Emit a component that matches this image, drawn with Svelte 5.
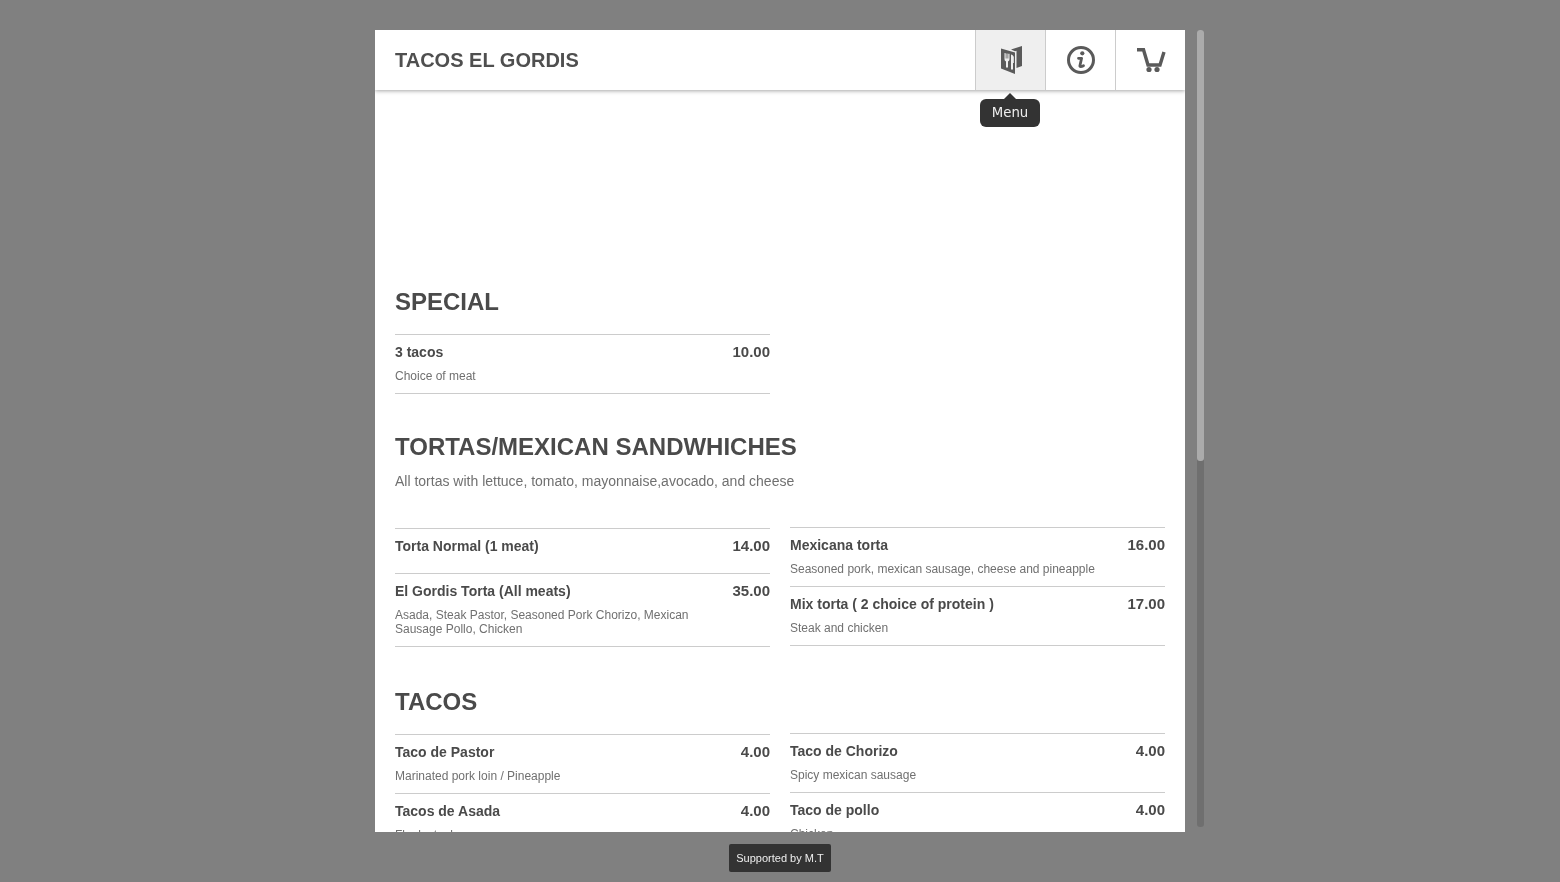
<script>
  const sections = [
    { title: 'SPECIAL', left: [{ n: '3 tacos', p: '10.00', d: 'Choice of meat' }], right: [], cls: 'first' },
    {
      title: 'TORTAS/MEXICAN SANDWHICHES',
      note: 'All tortas with lettuce, tomato, mayonnaise,avocado, and cheese',
      left: [
        { n: 'Torta Normal (1 meat)', p: '14.00' },
        { n: 'El Gordis Torta (All meats)', p: '35.00', d: 'Asada, Steak Pastor, Seasoned Pork Chorizo, Mexican Sausage Pollo, Chicken' }
      ],
      right: [
        { n: 'Mexicana torta', p: '16.00', d: 'Seasoned pork, mexican sausage, cheese and pineapple' },
        { n: 'Mix torta ( 2 choice of protein )', p: '17.00', d: 'Steak and chicken' }
      ]
    },
    {
      title: 'TACOS',
      cls: 'tacos',
      left: [
        { n: 'Taco de Pastor', p: '4.00', d: 'Marinated pork loin / Pineapple' },
        { n: 'Tacos de Asada', p: '4.00', d: 'Flank steak' }
      ],
      right: [
        { n: 'Taco de Chorizo', p: '4.00', d: 'Spicy mexican sausage' },
        { n: 'Taco de pollo', p: '4.00', d: 'Chicken' }
      ]
    }
  ];
</script>

{#snippet item(it)}
  <div class="item">
    <div class="text">
      <div class="name">{it.n}</div>
      {#if it.d}<div class="desc">{it.d}</div>{/if}
    </div>
    <div class="price">{it.p}</div>
  </div>
{/snippet}

<div class="page">
  <div class="stage">
    <div class="modal">
      <header class="bar">
        <h1>TACOS EL GORDIS</h1>
        <nav class="tabs">
          <div class="tab active">
            <svg width="26" height="32" viewBox="0 0 26 32">
              <path fill="#5a5a5a" fill-rule="evenodd" d="M3 4.500 L17 8.500 V30 L3 24.500 Z M6.500 9 V15 C6.500 16.500 7.300 17 8 17.500 V23.500 H10 V17.500 C10.700 17 11.500 16.500 11.500 15 V9.800 H10.300 V14.500 H9.500 V9.500 H8.500 V14.500 H7.700 V9.200 Z M13 10.500 V25.500 H15 V19 H15.800 V13 C15.300 11.500 14.200 10.700 13 10.500 Z"/>
              <path fill="#5a5a5a" d="M13 5.500 L24 2 V22 L18.500 24 V6.800 L17 7.300 Z"/>
            </svg>
            <div class="tip">Menu</div>
          </div>
          <div class="tab">
            <svg width="30" height="30" viewBox="0 0 30 30">
              <circle cx="15" cy="15" r="12.500" fill="none" stroke="#5a5a5a" stroke-width="3"/>
              <circle cx="16.300" cy="8.300" r="2.100" fill="#5a5a5a"/>
              <path fill="none" stroke="#5a5a5a" stroke-width="2.800" stroke-linecap="round" stroke-linejoin="round" d="M12.500 13.300 H15.600 L13.900 20.700 C13.700 21.800 15 22 17.500 20.700"/>
            </svg>
          </div>
          <div class="tab">
            <svg width="30" height="26" viewBox="0 0 30 26">
              <path fill="none" stroke="#5a5a5a" stroke-width="3.400" stroke-linejoin="miter" d="M1 2.700 H7.500 L12 18 H24 L28 5"/>
              <circle cx="13" cy="22.500" r="2.600" fill="#5a5a5a"/>
              <circle cx="21" cy="22.500" r="2.600" fill="#5a5a5a"/>
            </svg>
          </div>
        </nav>
      </header>
      <main class="scroll">
        {#each sections as s}
          <section class={s.cls}>
            <h2>{s.title}</h2>
            {#if s.note}<p class="note">{s.note}</p>{/if}
            <div class="cols">
              <div class="col">
                {#each s.left as it}{@render item(it)}{/each}
              </div>
              {#if s.right.length}
                <div class="col right">
                  {#each s.right as it}{@render item(it)}{/each}
                </div>
              {/if}
            </div>
          </section>
        {/each}
      </main>
    </div>
    <div class="rail"><div class="thumb"></div></div>
  </div>
  <footer><span class="badge">Supported by M.T</span></footer>
</div>

<style>
  :global(body) {
    margin: 0;
    background: #808080;
    overflow: hidden;
  }
  .page {
    height: 882px;
    display: flex;
    flex-direction: column;
    align-items: center;
    font-family: "Liberation Sans", Arial, sans-serif;
    color: #4a4a4a;
    padding-top: 30px;
    box-sizing: border-box;
  }
  .stage {
    display: flex;
    width: 810px;
    height: 802px;
    position: relative;
  }
  .modal {
    width: 810px;
    height: 802px;
    background: #fff;
    display: flex;
    flex-direction: column;
    overflow: hidden;
    flex: none;
    will-change: transform;
  }
  .rail {
    position: absolute;
    left: 822px;
    top: 0;
    width: 7px;
    height: 797px;
    background: #6f6f6f;
    border-radius: 3px;
  }
  .thumb {
    height: 431px;
    background: #ababab;
    border-radius: 3px;
  }
  .bar {
    height: 60px;
    flex: none;
    display: flex;
    align-items: center;
    justify-content: space-between;
    box-shadow: 0 1px 4px rgba(0, 0, 0, 0.35);
    position: relative;
    z-index: 2;
    background: #fff;
    padding-left: 20px;
  }
  h1 {
    margin: 0;
    font-size: 20px;
    font-weight: 700;
    color: #4f4f4f;
  }
  .tabs {
    display: flex;
    height: 60px;
  }
  .tab {
    width: 70px;
    height: 60px;
    box-sizing: border-box;
    border-left: 1px solid #ccc;
    display: flex;
    align-items: center;
    justify-content: center;
    position: relative;
  }
  .tab.active {
    background: #efefef;
  }
  .tip {
    position: absolute;
    left: 4px;
    top: 69px;
    width: 60px;
    height: 28px;
    background: #333;
    color: #eee;
    border-radius: 6px;
    font: 13.300px/27px "DejaVu Sans", sans-serif;
    text-align: center;
  }
  .tip::before {
    content: "";
    position: absolute;
    left: 24px;
    top: -6px;
    border-left: 6px solid transparent;
    border-right: 6px solid transparent;
    border-bottom: 6px solid #333;
  }
  .scroll {
    flex: 1;
    overflow: hidden;
    padding: 0 20px;
    min-height: 0;
  }
  section {
    padding-top: 38px;
  }
  section.first {
    padding-top: 197px;
  }
  section.tacos {
    padding-top: 40px;
  }
  h2 {
    margin: 0;
    font-size: 24px;
    line-height: 29px;
    font-weight: 700;
    color: #4a4a4a;
  }
  .note {
    margin: 10px 0 0;
    font-size: 14px;
    line-height: 20px;
    color: #707070;
  }
  .note + .cols {
    margin-top: 37px;
  }
  .cols {
    display: flex;
    gap: 20px;
    margin-top: 18px;
    align-items: flex-start;
  }
  .col {
    width: 375px;
    border-bottom: 1px solid #ccc;
  }
  .col.right {
    margin-top: -1px;
  }
  .item {
    border-top: 1px solid #ccc;
    padding: 9px 0 10px;
    display: flex;
    justify-content: space-between;
  }
  .text {
    width: 305px;
  }
  .name {
    font-size: 14px;
    line-height: 17px;
    font-weight: 700;
    color: #4a4a4a;
    margin-bottom: 8px;
  }
  .desc {
    font-size: 12px;
    line-height: 14px;
    color: #707070;
  }
  .price {
    font-size: 15px;
    line-height: 15px;
    font-weight: 700;
    color: #4a4a4a;
  }
  footer {
    margin-top: 12px;
  }
  .badge {
    display: block;
    box-sizing: border-box;
    width: 102px;
    background: #333;
    color: #eee;
    font-size: 11px;
    line-height: 28px;
    height: 28px;
    text-align: center;
    border-radius: 2px;
    will-change: transform;
  }
</style>
